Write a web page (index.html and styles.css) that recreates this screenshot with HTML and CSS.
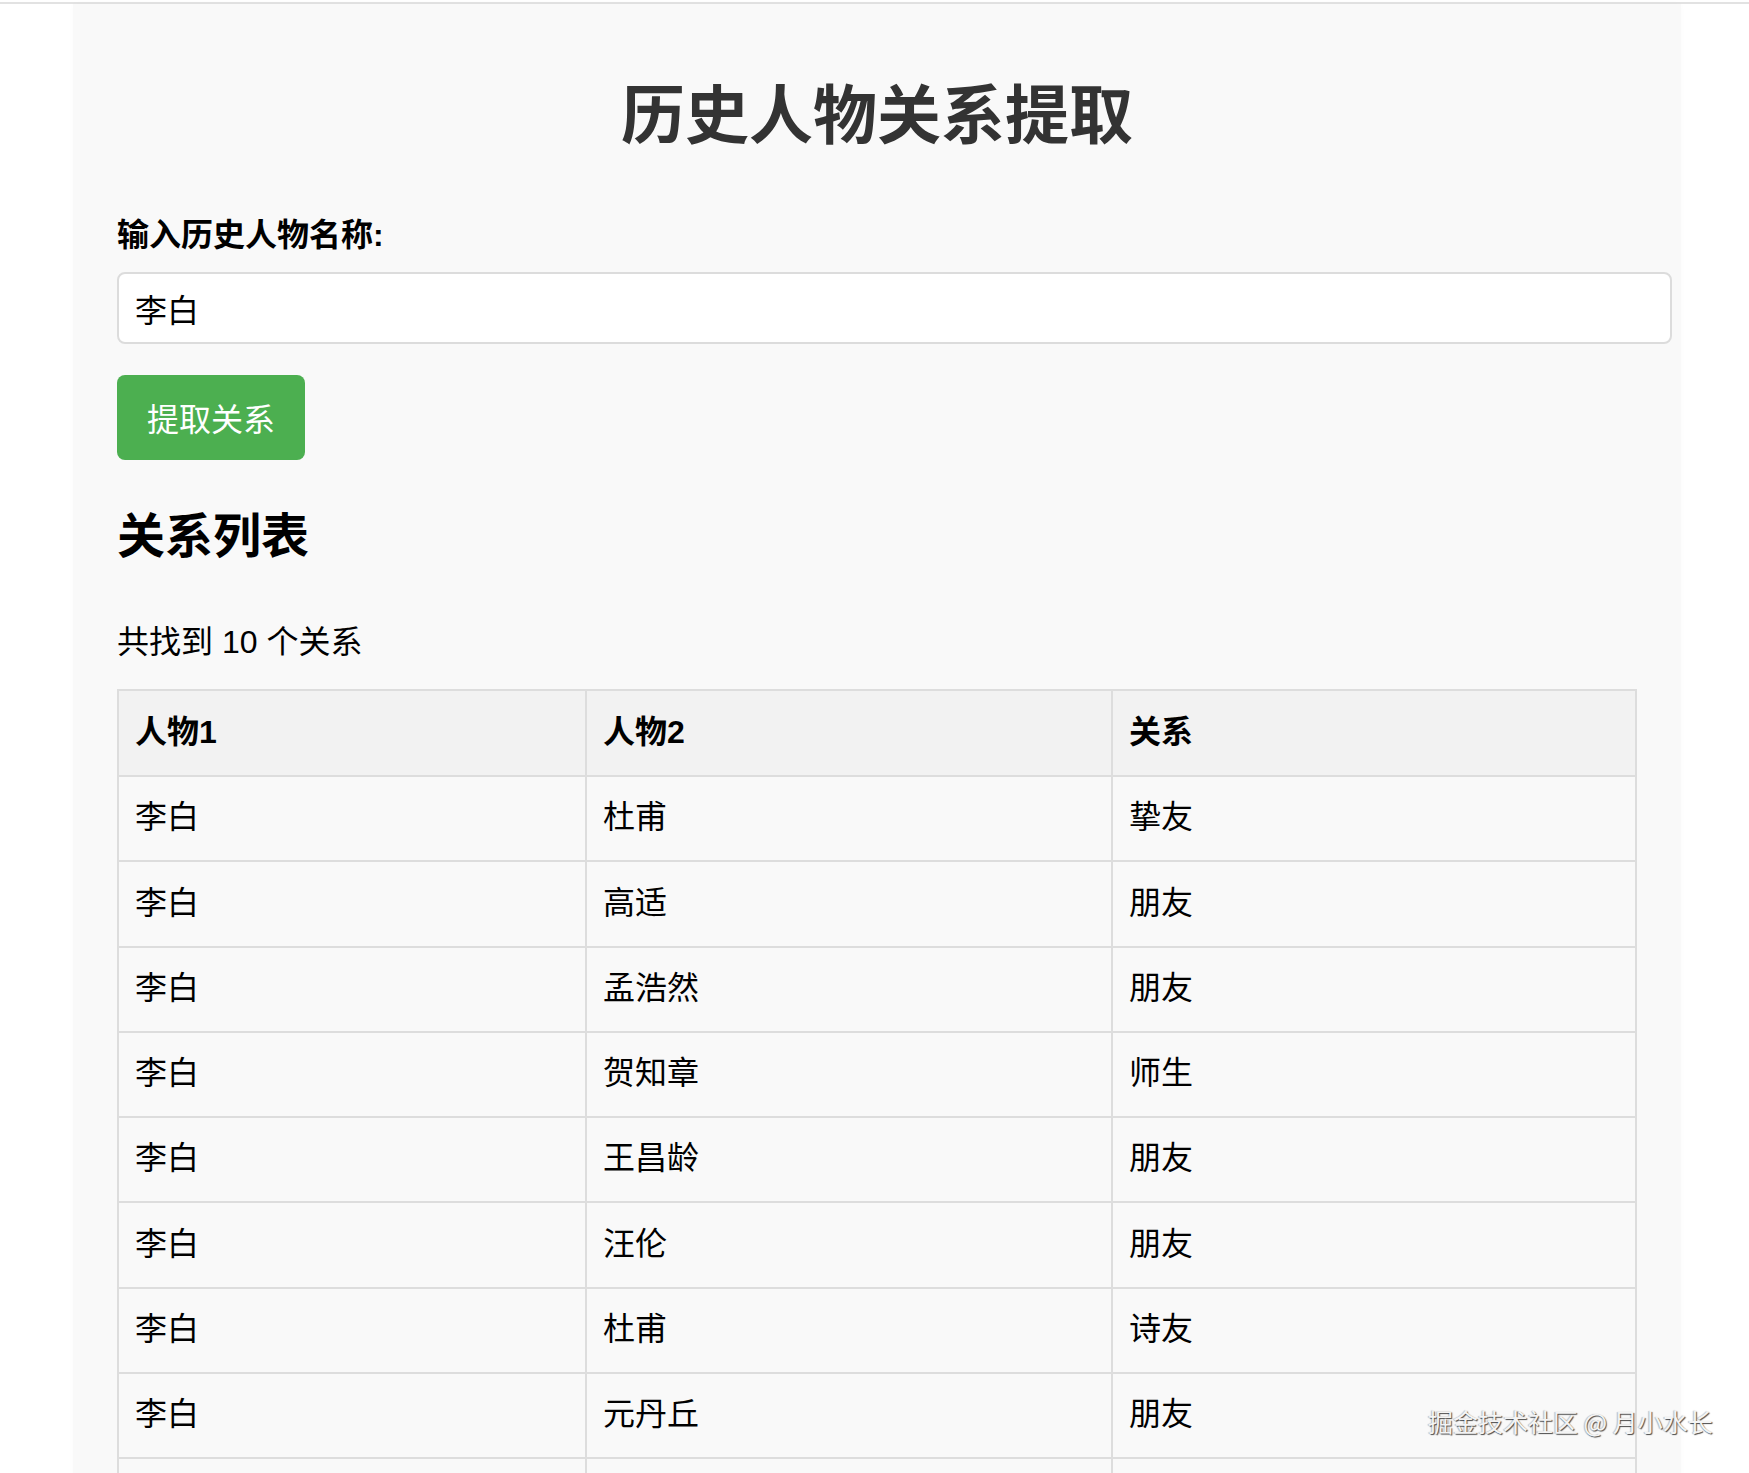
FILE: index.html
```html
<!DOCTYPE html>
<html lang="zh-CN">
<head>
<meta charset="utf-8">
<title>历史人物关系提取</title>
<link rel="stylesheet" href="styles.css">
</head>
<body>
<div class="topline"></div>
<div class="page">
  <h1 class="title">历史人物关系提取</h1>
  <label class="label" for="name">输入历史人物名称:</label>
  <input class="name-input" id="name" type="text" value="李白">
  <button class="btn" type="button">提取关系</button>
  <h2 class="subtitle">关系列表</h2>
  <p class="count">共找到 10 个关系</p>
  <table class="rel-table">
    <colgroup>
      <col class="c1">
      <col class="c2">
      <col class="c3">
    </colgroup>
    <thead>
      <tr><th>人物1</th><th>人物2</th><th>关系</th></tr>
    </thead>
    <tbody>
      <tr><td>李白</td><td>杜甫</td><td>挚友</td></tr>
      <tr><td>李白</td><td>高适</td><td>朋友</td></tr>
      <tr><td>李白</td><td>孟浩然</td><td>朋友</td></tr>
      <tr><td>李白</td><td>贺知章</td><td>师生</td></tr>
      <tr><td>李白</td><td>王昌龄</td><td>朋友</td></tr>
      <tr><td>李白</td><td>汪伦</td><td>朋友</td></tr>
      <tr><td>李白</td><td>杜甫</td><td>诗友</td></tr>
      <tr><td>李白</td><td>元丹丘</td><td>朋友</td></tr>
      <tr><td>李白</td><td>崔宗之</td><td>朋友</td></tr>
      <tr><td>李白</td><td>王维</td><td>朋友</td></tr>
    </tbody>
  </table>
</div>
<div class="watermark">掘金技术社区 @ 月小水长</div>
</body>
</html>
```
FILE: styles.css
```css
html, body {
  margin: 0;
  padding: 0;
  background: #ffffff;
}
body {
  font-family: "Liberation Sans", "Noto Sans CJK SC", Arial, sans-serif;
  color: #000;
}
.topline {
  margin-top: 2px;
  height: 2px;
  background: #e2e2e2;
}
.page {
  margin-left: 73px;
  width: 1520px;
  padding: 0 44px 40px 44px;
  background: #f9f9f9;
  box-shadow: 0 0 6px rgba(0,0,0,0.02);
  overflow: hidden;
}
.title {
  margin: 75px 0 0 0;
  font-size: 64px;
  line-height: 74px;
  font-weight: bold;
  color: #333;
  text-align: center;
}
.label {
  display: block;
  margin-top: 63px;
  font-size: 32px;
  line-height: 38px;
  font-weight: bold;
  color: #000;
}
.name-input {
  display: block;
  margin-top: 18px;
  width: 1519px;
  height: 36px;
  padding: 19px 16px 13px 16px;
  border: 2px solid #dcdcdc;
  border-radius: 8px;
  background: #fff;
  font-family: "Liberation Sans", "Noto Sans CJK SC", Arial, sans-serif;
  font-size: 32px;
  line-height: 36px;
  color: #000;
  outline: none;
}
.btn {
  display: block;
  box-sizing: border-box;
  margin-top: 31px;
  height: 85px;
  padding: 6px 30px 0 30px;
  border: none;
  border-radius: 8px;
  background: #4caf50;
  color: #fff;
  font-family: "Liberation Sans", "Noto Sans CJK SC", Arial, sans-serif;
  font-size: 32px;
  line-height: 37px;
}
.subtitle {
  margin: 49px 0 0 0;
  font-size: 48px;
  line-height: 56px;
  font-weight: bold;
}
.count {
  margin: 58px 0 0 0;
  font-size: 32px;
  line-height: 38px;
}
.rel-table {
  margin-top: 28px;
  width: 1518px;
  border-collapse: collapse;
  table-layout: fixed;
  font-size: 32px;
  line-height: 37px;
}
.c1 { width: 468px; }
.c2 { width: 526px; }
.c3 { width: 524px; }
.rel-table th,
.rel-table td {
  border: 2px solid #dddddd;
  padding: 22.25px 16px 24px 16px;
  text-align: left;
}
.rel-table th {
  padding-top: 23px;
  background: #f2f2f2;
  font-weight: bold;
}
.rel-table td {
  background: #f9f9f9;
}
.watermark {
  position: absolute;
  left: 1428px;
  top: 1405px;
  font-family: "Noto Sans CJK SC", "Liberation Sans", sans-serif;
  font-size: 25px;
  line-height: 32px;
  color: #f4f4f4;
  text-shadow: 1px 1px 1px rgba(0,0,0,0.7), -1px 0 1px rgba(0,0,0,0.25);
  white-space: nowrap;
}
```
